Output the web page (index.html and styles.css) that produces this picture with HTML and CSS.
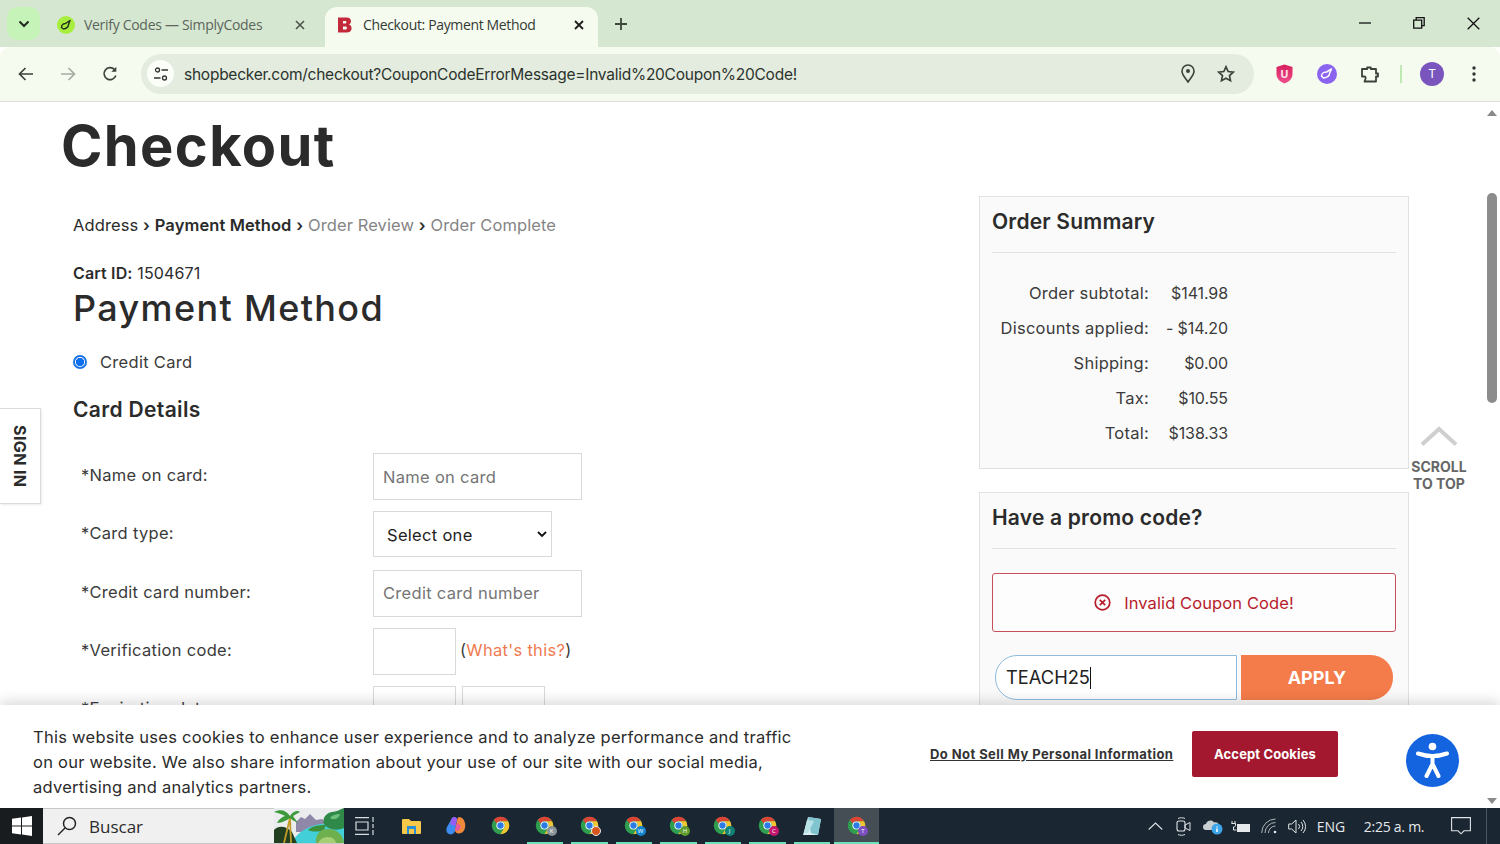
FILE: index.html
```html
<!DOCTYPE html>
<html lang="en">
<head>
<meta charset="utf-8">
<title>Checkout: Payment Method</title>
<link rel="stylesheet" href="styles.css">
</head>
<body>
<svg class="defs" width="0" height="0" aria-hidden="true">
  <symbol id="chrome" viewBox="0 0 24 24">
    <circle cx="12" cy="12" r="11" fill="#2f9e4f"/>
    <path d="M12 1a11 11 0 0 1 9.53 5.5H12a5.5 5.5 0 0 0-4.9 3L3.6 4.9A11 11 0 0 1 12 1z" fill="#dc4436"/>
    <path d="M21.53 6.5A11 11 0 0 1 12 23l4.76-8.25A5.5 5.5 0 0 0 16.8 9.2 5.5 5.5 0 0 0 12 6.5z" fill="#f6c42e"/>
    <circle cx="12" cy="12" r="5.2" fill="#fff"/>
    <circle cx="12" cy="12" r="4" fill="#2c7be5"/>
  </symbol>
</svg>

<header class="tabstrip">
  <div class="tab-search"><svg width="12" height="8" viewBox="0 0 12 8"><path d="M1.5 1.5 6 6l4.5-4.5" fill="none" stroke="#1f2a1f" stroke-width="2"/></svg></div>
  <div class="tab">
    <svg class="favicon" width="18" height="18" viewBox="0 0 18 18"><circle cx="9" cy="9" r="9" fill="#a8ee3e"/><path d="M4.500 11.500c0-2.500 2-4 4-4l4.500-3-1.500 4c0 2.500-2.500 4.500-5 4.500z" fill="none" stroke="#26331c" stroke-width="1.500" stroke-linejoin="round"/></svg>
    <span class="tab-title">Verify Codes — SimplyCodes</span>
    <svg class="tab-x" width="10" height="10" viewBox="0 0 10 10"><path d="M1 1l8 8M9 1l-8 8" stroke="#4b554b" stroke-width="1.600"/></svg>
  </div>
  <div class="tab tab-active">
    <svg class="favicon" width="16" height="18" viewBox="0 0 16 18"><path d="M1 1.500h8.500c3 0 4.500 1.500 4.500 3.700 0 1.600-.9 2.800-2 3.300 1.500.5 2.600 1.800 2.600 3.700 0 2.800-2 4.300-5 4.300H1zM6 5v2.500h2c1 0 1.400-.5 1.400-1.300S9 5 8 5zm0 5.500v3h2.400c1.100 0 1.600-.6 1.600-1.500s-.5-1.500-1.600-1.500z" fill="#c22a3c" fill-rule="evenodd"/></svg>
    <span class="tab-title">Checkout: Payment Method</span>
    <svg class="tab-x" width="10" height="10" viewBox="0 0 10 10"><path d="M1 1l8 8M9 1l-8 8" stroke="#1d1d1d" stroke-width="1.800"/></svg>
  </div>
  <svg class="new-tab" width="14" height="14" viewBox="0 0 14 14"><path d="M7 1v12M1 7h12" stroke="#3c463c" stroke-width="1.800"/></svg>
  <div class="win-controls">
    <svg width="12" height="2" viewBox="0 0 12 2"><path d="M0 1h12" stroke="#111" stroke-width="1.300"/></svg>
    <svg width="12" height="12" viewBox="0 0 12 12"><path d="M.7 3.200h8v8h-8zM3.200 3V.7h8v8H9" fill="none" stroke="#111" stroke-width="1.300"/></svg>
    <svg width="13" height="13" viewBox="0 0 13 13"><path d="M.7.7l11.600 11.600M12.300.7.700 12.300" stroke="#111" stroke-width="1.300"/></svg>
  </div>
</header>

<nav class="toolbar">
  <svg class="nav-ico" width="16" height="14" viewBox="0 0 16 14"><path d="M15 7H2M7.500 1 1.500 7l6 6" fill="none" stroke="#3a423a" stroke-width="1.700"/></svg>
  <svg class="nav-ico" width="16" height="14" viewBox="0 0 16 14"><path d="M1 7h13M8.500 1l6 6-6 6" fill="none" stroke="#a6aca4" stroke-width="1.700"/></svg>
  <svg class="nav-ico" width="16" height="16" viewBox="0 0 16 16"><path d="M13.800 9.500A6 6 0 1 1 12.500 3.500" fill="none" stroke="#3a423a" stroke-width="1.700"/><path d="M14.300.8v5h-5z" fill="#3a423a"/></svg>
  <div class="omnibox">
    <div class="site-info"><svg width="14" height="14" viewBox="0 0 14 14"><circle cx="3.500" cy="3" r="2" fill="none" stroke="#333" stroke-width="1.300"/><path d="M7.500 3H14M0 11h6.500" stroke="#333" stroke-width="1.500"/><circle cx="10.500" cy="11" r="2" fill="none" stroke="#333" stroke-width="1.300"/></svg></div>
    <span class="url">shopbecker.com/checkout?CouponCodeErrorMessage=Invalid%20Coupon%20Code!</span>
    <svg class="omni-pin" width="14" height="19" viewBox="0 0 14 19"><path d="M7 18C4 13.500 1 11 1 7a6 6 0 0 1 12 0c0 4-3 6.500-6 11z" fill="none" stroke="#3a423a" stroke-width="1.600"/><circle cx="7" cy="7" r="2" fill="#3a423a"/></svg>
    <svg class="omni-star" width="18" height="18" viewBox="0 0 18 18"><path d="M9 1.800l2.200 4.700 5.100.6-3.800 3.500 1 5.100L9 13.200l-4.500 2.500 1-5.100L1.700 7.100l5.100-.6z" fill="none" stroke="#3a423a" stroke-width="1.700"/></svg>
  </div>
  <div class="ext-group">
    <svg class="ext-ublock" width="17" height="20" viewBox="0 0 17 20"><defs><linearGradient id="ub" x1="0" y1="0" x2="0" y2="1"><stop offset="0" stop-color="#d81e5c"/><stop offset="1" stop-color="#ef4f8c"/></linearGradient></defs><path d="M8.500.5l8 2.500v7c0 4.500-3.500 8-8 9.500C4 18 .5 14.500.5 10V3z" fill="url(#ub)"/><text x="8.500" y="13.500" text-anchor="middle" class="ext-u">U</text></svg>
    <svg class="ext-purple" width="20" height="20" viewBox="0 0 20 20"><circle cx="10" cy="10" r="10" fill="#8a63ef"/><path d="M4.500 12c0-2.500 2.500-4 5-4l5-3-2 4.500c0 2.500-3 4.500-6 4.500z" fill="none" stroke="#fff" stroke-width="1.500" stroke-linejoin="round"/></svg>
    <svg class="ext-puzzle" width="20" height="20" viewBox="0 0 20 20"><path d="M2 5h5.200V3.500h3.600V5h5.200v4.500h2v3h-2v5H4.500l1-2.700c.4-1.300 0-2.300-1.300-2.300H2z" fill="none" stroke="#3a423a" stroke-width="1.800" stroke-linejoin="round"/></svg>
    <span class="ext-sep"></span>
    <span class="avatar">T</span>
    <svg class="kebab" width="4" height="16" viewBox="0 0 4 16"><circle cx="2" cy="2" r="1.700" fill="#333"/><circle cx="2" cy="8" r="1.700" fill="#333"/><circle cx="2" cy="14" r="1.700" fill="#333"/></svg>
  </div>
</nav>

<main class="page">
  <h1 class="page-title">Checkout</h1>
  <div class="columns">
    <section class="left-col">
      <p class="crumbs">Address <span class="sep">›</span> <b>Payment Method</b> <span class="sep">›</span> <span class="todo">Order Review</span> <span class="sep">›</span> <span class="todo">Order Complete</span></p>
      <p class="cart-id"><b>Cart ID:</b> 1504671</p>
      <h2 class="pay-title">Payment Method</h2>
      <label class="radio-row"><span class="radio"></span>Credit Card</label>
      <h3 class="card-title">Card Details</h3>
      <div class="form-row"><span class="form-label">*Name on card:</span><input class="field" placeholder="Name on card"></div>
      <div class="form-row"><span class="form-label">*Card type:</span>
        <div class="select-box"><span>Select one</span><svg width="10" height="7" viewBox="0 0 10 7"><path d="M1 1l4 4 4-4" fill="none" stroke="#111" stroke-width="1.800"/></svg></div>
      </div>
      <div class="form-row"><span class="form-label">*Credit card number:</span><input class="field" placeholder="Credit card number"></div>
      <div class="form-row"><span class="form-label">*Verification code:</span><input class="field field-small"><span class="whats">(<span class="link">What's this?</span>)</span></div>
      <div class="form-row"><span class="form-label">*Expiration date:</span><input class="field field-small"><input class="field field-small"></div>
    </section>
    <aside class="right-col">
      <div class="card card-summary">
        <h3 class="card-heading">Order Summary</h3>
        <dl class="totals">
          <dt>Order subtotal:</dt><dd>$141.98</dd>
          <dt>Discounts applied:</dt><dd>- $14.20</dd>
          <dt>Shipping:</dt><dd>$0.00</dd>
          <dt>Tax:</dt><dd>$10.55</dd>
          <dt>Total:</dt><dd>$138.33</dd>
        </dl>
      </div>
      <div class="card card-promo">
        <h3 class="card-heading">Have a promo code?</h3>
        <div class="alert">
          <svg width="17" height="17" viewBox="0 0 17 17"><circle cx="8.500" cy="8.500" r="7.300" fill="none" stroke="#b71c2c" stroke-width="1.700"/><path d="M5.800 5.800l5.400 5.400M11.200 5.800l-5.400 5.400" stroke="#b71c2c" stroke-width="1.700"/></svg>
          <span>Invalid Coupon Code!</span>
        </div>
        <div class="promo-row">
          <div class="promo-input">TEACH25<span class="caret"></span></div>
          <div class="apply">APPLY</div>
        </div>
      </div>
    </aside>
  </div>

  <div class="signin"><span>SIGN IN</span></div>
  <div class="to-top">
    <svg width="38" height="20" viewBox="0 0 38 20"><path d="M2 18.500 19 3l17 15.500" fill="none" stroke="#cfcfcf" stroke-width="4"/></svg>
    <span>SCROLL<br>TO TOP</span>
  </div>
  <div class="scrollbar">
    <svg width="10" height="6" viewBox="0 0 10 6"><path d="M5 0l5 6H0z" fill="#8a8a8a"/></svg>
    <div class="thumb"></div>
    <svg class="arrow-down" width="10" height="6" viewBox="0 0 10 6"><path d="M0 0h10L5 6z" fill="#8a8a8a"/></svg>
  </div>
  <div class="cookies">
    <p class="cookie-text">This website uses cookies to enhance user experience and to analyze performance and traffic on our website. We also share information about your use of our site with our social media, advertising and analytics partners.</p>
    <span class="cookie-link">Do Not Sell My Personal Information</span>
    <span class="cookie-btn">Accept Cookies</span>
    <svg class="a11y" width="53" height="53" viewBox="0 0 53 53"><circle cx="26.500" cy="26.500" r="26.500" fill="#1464e0"/><circle cx="26.500" cy="12.500" r="3.800" fill="#fff"/><path d="M12 19.500c5 1.800 9.500 2.600 14.500 2.600s9.500-.8 14.500-2.600M26.500 22v9M26.500 30l-6 12M26.500 30l6 12" fill="none" stroke="#fff" stroke-width="4" stroke-linecap="round"/></svg>
  </div>
</main>

<footer class="taskbar">
  <div class="start"><svg width="20" height="20" viewBox="0 0 20 20"><path d="M0 2.800 9 1.500v8H0zM10 1.400l10-1.400v9.500H10zM0 10.500h9v8L0 17.200zM10 10.500h10V20l-10-1.400z" fill="#fff"/></svg></div>
  <div class="search">
    <svg width="20" height="20" viewBox="0 0 20 20"><circle cx="12.500" cy="7.500" r="6" fill="none" stroke="#222" stroke-width="1.500"/><path d="M8 12l-7 7" stroke="#222" stroke-width="1.500"/></svg>
    <span class="search-text">Buscar</span>
    <svg class="search-art" width="70" height="35" viewBox="0 0 70 35">
      <rect width="70" height="35" fill="#eaeced"/>
      <path d="M22 14l5-5 4 2 5-5 6 6 6-1 6 5v8H22z" fill="#8f88a8"/>
      <path d="M18 35c4-10 14-16 28-19 8-1 16 0 24 3v16z" fill="#43cfd8"/>
      <path d="M34 22c4-4 10-5 18-5l-2 5c-5 2-12 2-16 0z" fill="#3d8f3a"/>
      <path d="M0 35V22c5-5 12-4 18 2l5 11z" fill="#22401f"/>
      <path d="M10 35 16 10M17 35 16 10" stroke="#c29a28" stroke-width="1.800" fill="none"/>
      <path d="M0 4c6-3 12-2 16 4 3-5 8-6 10-4l-7 4 5 7c-4-2-7-4-8-5-3 2-8 5-13 5 2-4 5-6 8-7-3-2-7-3-11-4z" fill="#3c9a3a"/>
      <path d="M42 35c-1-8 4-14 12-14s15 5 16 14z" fill="#6fb04e"/>
      <path d="M44 35c2-4 6-6 10-6s7 2 8 6z" fill="#a5cf72"/>
      <path d="M50 16c-2-6 2-11 8-12 4 0 9-3 12-4v20c-7 3-16 2-20-4z" fill="#2f8a4a"/>
      <path d="M56 10c2-3 6-4 10-4-1 4-5 7-10 4z" fill="#6fc07a"/>
    </svg>
  </div>
  <div class="apps">
    <div class="app app-first"><svg width="20" height="18" viewBox="0 0 20 18"><path d="M0 .7h14M0 17.300h14M1 5h12v8H1zM18 0v5M18 7v4M18 13v5" fill="none" stroke="#d8dde2" stroke-width="1.200"/></svg></div>
    <div class="app"><svg width="19" height="16" viewBox="0 0 19 16"><path d="M0 2a1 1 0 0 1 1-1h6l2 2h9a1 1 0 0 1 1 1v11a1 1 0 0 1-1 1H1a1 1 0 0 1-1-1z" fill="#f5c84a"/><path d="M5 8h9v8H5z" fill="#2a8fd6"/><path d="M7 11h5v5H7z" fill="#f5c84a"/></svg></div>
    <div class="app"><svg width="20" height="20" viewBox="0 0 20 20"><path d="M6 2c2-2 5-1 5 2L9 15c-1 3-4 4-6 3-3-1-3-5-2-7z" fill="#3f8cf0"/><path d="M6 2c2-2 5-1 5 2L9 10 4 8z" fill="#9a5cf0"/><path d="M13 1c3 0 5 2 6 6 1 5-1 9-4 10-3 1-6 0-6-3l2-9c0-2 1-4 2-4z" fill="#f08a3a"/><path d="M9 14l2-7 4 3c-1 4-3 6-6 4z" fill="#e85aa0"/></svg></div>
    <div class="app"><svg class="chrome" viewBox="0 0 24 24"><use href="#chrome"/></svg></div>
    <div class="app app-open"><svg class="chrome" viewBox="0 0 24 24"><use href="#chrome"/></svg><span class="badge badge-k">K</span></div>
    <div class="app app-open"><svg class="chrome" viewBox="0 0 24 24"><use href="#chrome"/></svg><span class="badge badge-o"></span></div>
    <div class="app app-open"><svg class="chrome" viewBox="0 0 24 24"><use href="#chrome"/></svg><span class="badge badge-w">W</span></div>
    <div class="app app-open"><svg class="chrome" viewBox="0 0 24 24"><use href="#chrome"/></svg><span class="badge badge-h">H</span></div>
    <div class="app app-open"><svg class="chrome" viewBox="0 0 24 24"><use href="#chrome"/></svg><span class="badge badge-j">J</span></div>
    <div class="app app-open"><svg class="chrome" viewBox="0 0 24 24"><use href="#chrome"/></svg><span class="badge badge-c">C</span></div>
    <div class="app app-open"><svg width="20" height="20" viewBox="0 0 20 20"><path d="M6 1l13 2-3 16H1z" fill="#d8eef0"/><path d="M6 1l13 2-3 16L9 17z" fill="#7fc4cf"/><path d="M5 4l7 1-6 12H2z" fill="#b7e2e6"/></svg></div>
    <div class="app app-open app-active"><svg class="chrome" viewBox="0 0 24 24"><use href="#chrome"/></svg><span class="badge badge-t">T</span></div>
  </div>
  <div class="tray">
    <div class="tray-item ti-28"><svg width="15" height="8" viewBox="0 0 15 8"><path d="M.7 7.500 7.500 1l6.800 6.500" fill="none" stroke="#dfe3e6" stroke-width="1.100"/></svg></div>
    <div class="tray-item ti-28 ti-gap"><svg width="15" height="19" viewBox="0 0 15 19"><rect x="1" y="4" width="8" height="10" rx="2" fill="none" stroke="#dfe3e6" stroke-width="1.100"/><path d="M9 8l5-2.500v8L9 11zM2 1.500c2-1 5-1 7 0M2 17.500c2 1 5 1 7 0" fill="none" stroke="#dfe3e6" stroke-width="1"/></svg></div>
    <div class="tray-item ti-28"><svg width="20" height="18" viewBox="0 0 20 18"><path d="M3 13a3 3 0 0 1 0-6c.6-3.500 6-5 8-1.500 3-1 5.500 1 5 4.500L14 13z" fill="#c9ced3"/><circle cx="14" cy="12" r="5.500" fill="#3ea6e8"/><path d="M14 9.500v1M14 11.500v3.500" stroke="#fff" stroke-width="1.500"/></svg></div>
    <div class="tray-item ti-28"><svg width="20" height="13" viewBox="0 0 20 13"><path d="M1 1v2.500M4 1v2.500M.5 3.500h4v2c0 1-1 1.500-2 1.500v3h3" fill="none" stroke="#e6e9ec" stroke-width="1"/><rect x="6" y="4" width="13" height="8" fill="#e6e9ec"/></svg></div>
    <div class="tray-item ti-28"><svg width="16" height="16" viewBox="0 0 16 16"><path d="M.7 15A14 14 0 0 1 14.500 1M4 15A10.500 10.500 0 0 1 14.500 4.500M7.500 15a7 7 0 0 1 7-7" fill="none" stroke="#aeb4b9" stroke-width="1"/><circle cx="14" cy="14" r="1.300" fill="#e6e9ec"/></svg></div>
    <div class="tray-item ti-27"><svg width="18" height="15" viewBox="0 0 18 15"><path d="M.7 5h3L8 1v13L3.700 10h-3zM10.500 5a3.500 3.500 0 0 1 0 5M13 3a6.500 6.500 0 0 1 0 9M15 1a9.500 9.500 0 0 1 0 13" fill="none" stroke="#dfe3e6" stroke-width="1"/></svg></div>
    <div class="tray-item tray-text ti-42">ENG</div>
    <div class="tray-item tray-text tray-time ti-84">2:25 a. m.</div>
    <div class="tray-item ti-50"><svg width="20" height="18" viewBox="0 0 20 18"><path d="M.6.6h18.800v13.200H13l-3 3-3-3H.6z" fill="none" stroke="#dfe3e6" stroke-width="1.100"/></svg></div>
    <div class="show-desktop"></div>
  </div>
</footer>
</body>
</html>
```

FILE: styles.css
```css
* { box-sizing: border-box; }
html, body { margin: 0; height: 100%; overflow: hidden; }
body { display: flex; flex-direction: column; width: 1500px; height: 844px; font-family: "Inter", "Liberation Sans", sans-serif; color: #2b2b2b; background: #fff; }
.defs { position: absolute; }

/* browser chrome */
.tabstrip { flex: 0 0 47px; display: flex; align-items: flex-start; background: #d5e7d1; padding: 7px 0 0 7px; font-family: "Open Sans", "Liberation Sans", sans-serif; }
.tab-search { width: 33px; height: 33px; border-radius: 10px; background: #c6f3b8; display: flex; align-items: center; justify-content: center; }
.tab { width: 279px; height: 40px; display: flex; align-items: center; padding: 0 14px 5px 17px; font-size: 14px; color: #5b655b; flex: 0 0 auto; }
.tab .favicon { flex: none; margin-right: 9px; }
.tab-title { flex: 1; letter-spacing: -0.3px; white-space: nowrap; }
.tab-x { flex: none; }
.tab-active { width: 273px; background: #f6fbf0; border-radius: 12px 12px 0 0; color: #333a33; margin-left: 6px; padding-left: 12px; }
.tab-active .favicon { margin-right: 10px; }
.tab-active .tab-title { letter-spacing: -0.35px; }
.new-tab { margin: 10px 0 0 16px; flex: none; }
.win-controls { margin-left: auto; display: flex; align-items: center; gap: 42px; padding: 5px 20px 0 0; height: 27px; }

.toolbar { flex: 0 0 55px; display: flex; align-items: center; background: #f6fbf0; border-bottom: 1px solid #dcdfdc; border-radius: 10px 10px 0 0; padding: 0 0 1px 18px; }
.nav-ico { flex: none; margin-right: 26px; }
.nav-ico:nth-of-type(3) { margin-right: 23px; }
.omnibox { width: 1113px; height: 40px; border-radius: 20px; background: #e3ecdf; display: flex; align-items: center; padding: 0 19px 0 6px; flex: none; }
.site-info { width: 27px; height: 27px; border-radius: 50%; background: #fbfdf9; display: flex; align-items: center; justify-content: center; flex: none; margin-right: 10px; }
.url { flex: 1; font-size: 15.500px; color: #2c332c; letter-spacing: -0.25px; white-space: nowrap; padding-top: 1px; }
.omni-pin { margin-right: 22px; flex: none; }
.omni-star { flex: none; }
.ext-group { display: flex; align-items: center; flex: 1; padding-left: 22px; }
.ext-ublock { flex: none; margin-right: 24px; }
.ext-u { font: 700 11px "Open Sans", sans-serif; fill: #fde3ee; }
.ext-purple { flex: none; margin-right: 23px; }
.ext-puzzle { flex: none; margin-right: 20px; }
.ext-sep { width: 2px; height: 18px; background: #bfe8b4; margin-right: 18px; }
.avatar { width: 24px; height: 24px; border-radius: 50%; background: #7a55bd; color: #fff; font-size: 12px; display: flex; align-items: center; justify-content: center; margin-right: 28px; }
.kebab { flex: none; }

/* page */
.page { flex: 1; position: relative; overflow: hidden; background: #fff; }
.page-title { margin: 16px 0 0 61px; font-size: 56px; line-height: 56px; font-weight: 700; letter-spacing: 1.400px; color: #2b2b2b; }
.columns { display: flex; margin-top: 22px; padding-left: 73px; }
.left-col { width: 906px; flex: none; font-size: 16.500px; letter-spacing: 0.3px; }
.crumbs { margin: 18px 0 0; line-height: 22px; letter-spacing: 0.1px; }
.crumbs b { font-weight: 600; }
.sep { font-weight: 600; }
.todo { color: #858585; }
.cart-id { margin: 26px 0 0; font-size: 16px; line-height: 22px; letter-spacing: 0.15px; }
.cart-id b { font-weight: 600; }
.pay-title { margin: 2px 0 0; font-size: 36px; line-height: 44px; font-weight: 500; letter-spacing: 1.350px; }
.radio-row { display: flex; align-items: center; margin-top: 21px; line-height: 22px; color: #3b3b3b; }
.radio { width: 14px; height: 14px; border-radius: 50%; border: 2px solid #1a73e8; background: radial-gradient(circle, #0b6ff0 0 3.900px, #fff 4.400px); margin-right: 13px; }
.card-title { margin: 24px 0 0; font-size: 21px; line-height: 26px; font-weight: 600; letter-spacing: 0.35px; }
.form-row { display: flex; align-items: flex-start; height: 58.300px; padding-left: 8px; }
.card-title + .form-row { margin-top: 30px; }
.form-label { width: 292px; flex: none; line-height: 22px; padding-top: 11px; color: #3b3b3b; }
.field { width: 209px; height: 47px; border: 1px solid #d9d9d9; padding: 0 9px; font: inherit; letter-spacing: inherit; color: #333; background: #fff; border-radius: 0; flex: none; outline: none; }
.field::placeholder { color: #757575; opacity: 1; }
.field-small { width: 83px; margin-right: 6px; }
.select-box { width: 179px; height: 46px; border: 1px solid #d9d9d9; display: flex; align-items: center; justify-content: space-between; padding: 1px 4px 0 13px; color: #222; }
.whats { line-height: 44px; color: #3b3b3b; margin-left: -2px; }
.link { color: #ef7b50; }

.right-col { width: 430px; flex: none; }
.card { background: #fafafa; border: 1px solid #e1e1e1; padding: 0 12px; }
.card-summary { height: 273px; }
.card-promo { margin-top: 23px; height: 260px; }
.card-heading { margin: 0; height: 56px; padding-top: 11px; font-size: 21px; line-height: 27px; font-weight: 600; letter-spacing: 0.2px; border-bottom: 1px solid #e2e2e2; }
.totals { display: grid; grid-template-columns: 157px 79px; margin: 23px 0 0; font-size: 16.500px; letter-spacing: 0.25px; line-height: 35px; color: #3b3b3b; }
.totals dt { text-align: right; white-space: nowrap; }
.totals dd { margin: 0; text-align: right; white-space: nowrap; font-size: 16px; letter-spacing: -0.1px; }
.alert { margin-top: 24px; height: 59px; border: 1px solid #c4505c; border-radius: 3px; background: #fdfdfd; display: flex; align-items: center; justify-content: center; gap: 13px; color: #b71c2c; font-size: 16.500px; letter-spacing: 0.1px; }
.promo-row { display: flex; margin: 23px 3px 0; height: 45px; }
.promo-input { width: 243px; border: 1px solid #8fbcdc; border-radius: 22px 0 0 22px; background: #fff; font-size: 18.300px; line-height: 43px; padding-left: 10px; color: #222; display: flex; align-items: center; }
.caret { width: 1.500px; height: 22px; background: #111; }
.apply { width: 153px; margin-left: 4px; border-radius: 0 22px 22px 0; background: #f47b4a; color: #fff; font-weight: 700; font-size: 18px; display: flex; align-items: center; justify-content: center; }

.signin { position: absolute; left: 0; top: 306px; width: 41px; height: 96px; background: #fff; border: 1px solid #dcdcdc; border-left: 0; box-shadow: 1px 1px 2px rgba(0,0,0,.08); display: flex; align-items: center; justify-content: center; }
.signin span { writing-mode: vertical-rl; font-weight: 700; font-size: 16px; letter-spacing: 0.4px; color: #2b2b2b; }
.to-top { position: absolute; left: 1399px; top: 324px; width: 80px; display: flex; flex-direction: column; align-items: center; color: #666; font-weight: 700; font-size: 14px; line-height: 17px; text-align: center; gap: 12px; }
.scrollbar { position: absolute; right: 0; top: 0; bottom: 0; width: 16px; background: #fff; display: flex; flex-direction: column; align-items: center; padding-top: 8px; }
.thumb { width: 10px; height: 210px; border-radius: 5px; background: #8c8c8c; margin-top: 77px; }
.arrow-down { margin-top: auto; margin-bottom: 4px; position: relative; z-index: 2; }
.cookies { position: absolute; left: 0; right: 0; bottom: 0; height: 103px; background: #fff; box-shadow: 0 -4px 12px rgba(0,0,0,.14); display: flex; align-items: flex-start; padding: 20px 0 0 33px; }
.cookie-text { width: 775px; margin: 0; font-size: 16.500px; line-height: 25px; letter-spacing: 0.26px; color: #2b2b2b; flex: none; }
.cookie-link { margin: 19px 0 0 122px; font-size: 13px; line-height: 20px; font-weight: 700; letter-spacing: 0.43px; text-decoration: underline; white-space: nowrap; color: #333; width: 243px; flex: none; }
.cookie-btn { margin: 6px 0 0 19px; width: 146px; height: 46px; background: #a3182e; border-radius: 2px; color: #fff; font-size: 13px; letter-spacing: 0.12px; font-weight: 700; display: flex; align-items: center; justify-content: center; flex: none; }
.a11y { margin: 9px 0 0 68px; flex: none; }

/* taskbar */
.taskbar { flex: 0 0 36px; display: flex; background: #1a2631; color: #e6e9ec; font-family: "Open Sans", "Liberation Sans", sans-serif; }
.start { width: 43px; background: #191c1f; display: flex; align-items: center; justify-content: center; flex: none; }
.search { width: 301px; display: flex; align-items: center; background: #f0f0f0; border: 1px solid #c8c8c8; border-width: 1px 0; padding-left: 14px; flex: none; color: #2a2a2a; position: relative; }
.search-text { margin-left: 12px; font-size: 17px; }
.search-art { position: absolute; right: 0; top: -1px; }
.apps { display: flex; flex: none; }
.app { width: 44.500px; height: 36px; display: flex; align-items: center; justify-content: center; position: relative; padding-bottom: 1px; }
.app-first { width: 45px; padding-right: 3px; }
.app-open::after { content: ""; position: absolute; left: 4px; right: 4px; bottom: 0; height: 2px; background: #6fe0b8; }
.app-active { background: #454e54; }
.app-active::after { left: 0; right: 0; }
.chrome { width: 19px; height: 19px; }
.badge { position: absolute; left: 24px; top: 18px; width: 10px; height: 10px; border-radius: 50%; font-size: 6px; line-height: 10px; text-align: center; color: #fff; }
.badge-k { background: #8a9299; }
.badge-o { background: #d8571f; border: 1px solid #e8e8e8; }
.badge-w { background: #1385cf; }
.badge-h { background: #5f9c2e; }
.badge-j { background: #0f8277; }
.badge-c { background: #c3186c; }
.badge-t { background: #7b4fc0; }
.tray { margin-left: auto; display: flex; align-items: center; height: 36px; }
.tray-item { display: flex; align-items: center; justify-content: center; height: 36px; flex: none; }
.tray-text { font-size: 14px; white-space: nowrap; }
.tray-time { letter-spacing: -0.25px; }
.ti-gap { margin-right: 2px; }
.ti-27 { width: 27px; }
.ti-28 { width: 28px; }
.ti-42 { width: 42px; }
.ti-84 { width: 84px; }
.ti-50 { width: 50px; }
.show-desktop { width: 14px; height: 36px; border-left: 1px solid #4c565f; }
```
